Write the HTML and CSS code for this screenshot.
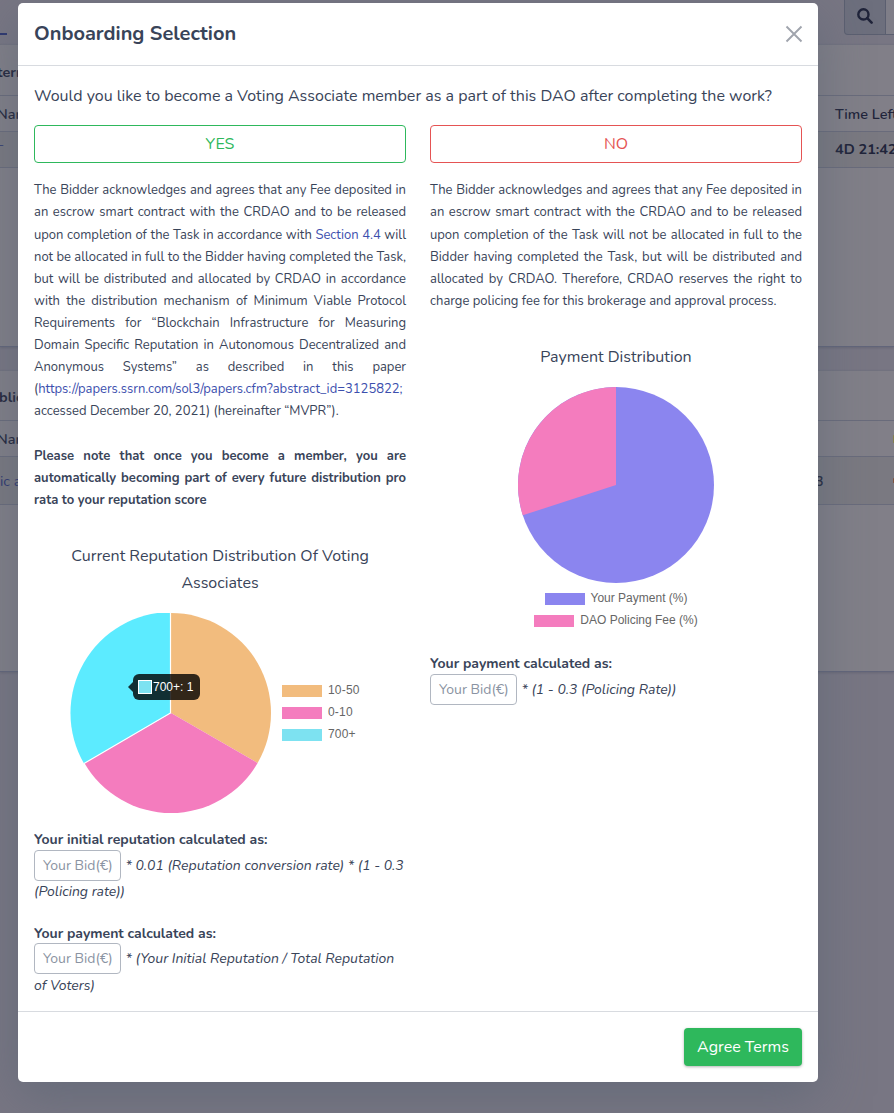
FILE: index.html
```html
<!DOCTYPE html>
<html lang="en">
<head>
<meta charset="utf-8">
<title>Onboarding Selection</title>
<link rel="stylesheet" href="styles.css">
</head>
<body>
<main class="page">
  <div class="toolbar">
    <span class="tab-line"></span>
    <div class="search">
      <span class="search-btn"><svg width="16" height="16" viewBox="0 0 16 16"><circle cx="6.4" cy="6.4" r="5.1" fill="none" stroke="#20243a" stroke-width="2.4"/><path d="M10.2 10.2L14.6 14.6" stroke="#20243a" stroke-width="2.6" stroke-linecap="round"/></svg></span>
      <span class="search-input"></span>
    </div>
  </div>
  <section class="card card-first">
    <div class="card-head">tern</div>
    <div class="row"><span class="cell">Nam</span><span class="cell-right">Time Left</span></div>
    <div class="row row-alt"><span class="cell link dash">–</span><span class="cell-right strong">4D 21:42</span></div>
  </section>
  <section class="card card-second">
    <div class="card-head">blic</div>
    <div class="row"><span class="cell">Nam</span><i class="mark yellow"></i></div>
    <div class="row row-alt row-tall"><span class="cell link">ic a</span><span class="cell-num">3</span><i class="mark red"></i></div>
  </section>
</main>

<div class="modal">
  <header class="modal-head">
    <h1 class="title">Onboarding Selection</h1>
    <svg class="close" width="18" height="18" viewBox="0 0 18 18"><path d="M1.5 1.5L16.5 16.5M16.5 1.5L1.5 16.5" fill="none" stroke="#a0a4ad" stroke-width="1.9"/></svg>
  </header>
  <div class="modal-body">
    <p class="question">Would you like to become a Voting Associate member as a part of this DAO after completing the work?</p>
    <div class="columns">
      <div class="col">
        <button class="choice yes">YES</button>
        <p class="terms">The Bidder acknowledges and agrees that any Fee deposited in an escrow smart contract with the CRDAO and to be released upon completion of the Task in accordance with <a class="anchor">Section 4.4</a> will not be allocated in full to the Bidder having completed the Task, but will be distributed and allocated by CRDAO in accordance with the distribution mechanism of Minimum Viable Protocol Requirements for “Blockchain Infrastructure for Measuring Domain Specific Reputation in Autonomous Decentralized and Anonymous Systems” as described in this paper (<a class="anchor">https://papers.ssrn.com/sol3/papers.cfm?abstract_id=3125822;</a> accessed December 20, 2021) (hereinafter “MVPR”).<br><br><b>Please note that once you become a member, you are automatically becoming part of every future distribution pro rata to your reputation score</b></p>
        <h2 class="chart-title">Current Reputation Distribution Of Voting Associates</h2>
        <div class="rep-chart">
          <svg class="rep-pie" width="202" height="200" viewBox="0 0 202 200">
            <path d="M101 100V0A100 100 0 0 1 187.6 150Z" fill="#f2bc7e"/>
            <path d="M101 100L187.6 150A100 100 0 0 1 14.4 150Z" fill="#f47cbe"/>
            <path d="M101 100L14 150.5A101 101 0 0 1 101 -1Z" fill="#5cebff"/>
            <path d="M100.5 -1V100L14 150.5" fill="none" stroke="#fff" stroke-width="1.2"/>
          </svg>
          <div class="tip"><i class="tip-box"></i>700+: 1</div>
          <ul class="legend">
            <li><i class="sw orange"></i>10-50</li>
            <li><i class="sw pink"></i>0-10</li>
            <li><i class="sw cyan"></i>700+</li>
          </ul>
        </div>
        <div class="calc">
          <b class="calc-label">Your initial reputation calculated as:</b>
          <div class="calc-row"><span class="bid">Your Bid(€)</span><em>* 0.01 (Reputation conversion rate) * (1 - 0.3</em></div>
          <em class="calc-rest">(Policing rate))</em>
        </div>
        <div class="calc calc-second">
          <b class="calc-label">Your payment calculated as:</b>
          <div class="calc-row"><span class="bid">Your Bid(€)</span><em>* (Your Initial Reputation / Total Reputation</em></div>
          <em class="calc-rest">of Voters)</em>
        </div>
      </div>
      <div class="col">
        <button class="choice no">NO</button>
        <p class="terms">The Bidder acknowledges and agrees that any Fee deposited in an escrow smart contract with the CRDAO and to be released upon completion of the Task will not be allocated in full to the Bidder having completed the Task, but will be distributed and allocated by CRDAO. Therefore, CRDAO reserves the right to charge policing fee for this brokerage and approval process.</p>
        <h2 class="chart-title">Payment Distribution</h2>
        <div class="pay-chart">
          <svg width="196" height="196" viewBox="0 0 196 196">
            <circle cx="98" cy="98" r="98" fill="#8b85ef"/>
            <path d="M98 98V0A98 98 0 0 0 4.8 128.3Z" fill="#f47cbe"/>
          </svg>
          <ul class="legend legend-center">
            <li><i class="sw violet"></i>Your Payment (%)</li>
            <li><i class="sw pink"></i>DAO Policing Fee (%)</li>
          </ul>
        </div>
        <div class="calc calc-pay">
          <b class="calc-label">Your payment calculated as:</b>
          <div class="calc-row"><span class="bid">Your Bid(€)</span><em>* (1 - 0.3 (Policing Rate))</em></div>
        </div>
      </div>
    </div>
  </div>
  <footer class="modal-foot"><button class="agree">Agree Terms</button></footer>
</div>
</body>
</html>
```
FILE: styles.css
```css
* { box-sizing: border-box; }
html, body { margin: 0; height: 1113px; overflow: hidden; }
body { position: relative; font-family: Nunito, Lato, "Open Sans", sans-serif; font-size: 16px; line-height: 1.7; color: #394459; background: #787683; }
h1, h2, p, ul { margin: 0; padding: 0; font-weight: 400; }

.toolbar { height: 44px; display: flex; justify-content: space-between; }
.tab-line { width: 7px; height: 2px; margin-top: 33px; background: #2c366f; }
.search { display: flex; height: 35px; width: 50px; }
.search-btn { width: 42px; padding: 8px 0 0 12px; line-height: 0; background: #6d6f7d; border: 1px solid #5b5f70; border-top: 0; border-bottom-left-radius: 4px; }
.search-input { flex: 1; background: #7f7e88; border-bottom: 1px solid #5b5f70; }
.card { background: #817f88; border-top: 1px solid #72727f; border-bottom: 1px solid #62657a; font-size: 14.4px; line-height: 37px; color: #20243a; box-shadow: 0 1px 2px rgba(40,45,70,.2); }
.card-first { height: 303px; }
.card-second { height: 302px; margin-top: 23px; }
.card-head { height: 51px; line-height: 55px; font-weight: 700; border-bottom: 1px solid #696b7b; text-indent: -3px; }
.card-second .card-head { height: 50px; line-height: 53px; text-indent: -1px; }
.row { height: 36px; display: flex; justify-content: space-between; border-bottom: 1px solid #696b7b; white-space: nowrap; }
.cell { margin-left: -3px; font-weight: 600; }
.cell-right { width: 59px; font-weight: 600; }
.strong { font-weight: 700; line-height: 35px; }
.row-alt { background: #7a7981; }
.row-tall { height: 48px; line-height: 48px; }
.link { color: #2c366f; margin-left: 0; font-weight: 400; }
.dash { margin-left: -4px; line-height: 24px; }
.cell-num { width: 78px; margin-left: auto; font-weight: 600; }
.mark { width: 1px; height: 8px; align-self: center; border-radius: 1px; }
.yellow { background: #84804f; }
.red { height: 5px; background: #80533f; }

.modal { position: absolute; left: 18px; top: 3px; width: 800px; height: 1079px; display: flex; flex-direction: column; background: #fff; border-radius: 5px; box-shadow: 0 14px 50px rgba(82,95,112,.5); }
.modal-head { height: 63px; flex: none; padding: 0 15px 0 16px; display: flex; align-items: center; justify-content: space-between; border-bottom: 1px solid #d8dbe0; }
.title { font-size: 20px; font-weight: 700; line-height: 34px; }
.modal-body { flex: 1; padding: 17px 16px 10px; }
.question { height: 27px; margin-bottom: 15px; white-space: nowrap; }
.columns { display: grid; grid-template-columns: 372px 372px; gap: 24px; }
.choice { display: block; width: 100%; height: 38px; padding: 1px 0 0; background: #fff; border: 1px solid; border-radius: 4px; font: inherit; }
.yes { color: #2eb85c; }
.no { color: #e55353; }
.terms { margin-top: 16.4px; font-size: 13px; line-height: 22.1px; text-align: justify; }
.terms b { font-weight: 700; }
.anchor { color: #3c4fae; }
.chart-title { margin-top: 32.2px; font-size: 16px; line-height: 27.2px; text-align: center; }
.rep-chart { position: relative; height: 200px; margin-top: 16px; padding-left: 36px; display: flex; align-items: center; gap: 10px; }
.legend { list-style: none; margin-top: -2px; font: 12px/22px "Liberation Sans", Arial, sans-serif; color: #666; letter-spacing: .2px; }
.legend li { height: 22px; display: flex; align-items: center; gap: 6px; white-space: nowrap; }
.legend-center { margin-top: 0; letter-spacing: 0; }
.legend-center li { justify-content: center; }
.sw { width: 40px; height: 12px; position: relative; top: 1px; }
.orange { background: #f2bc7e; }
.pink { background: #f47cbe; }
.cyan { background: #7de2f1; }
.violet { background: #8b85ef; }
.tip { position: absolute; left: 99px; top: 61px; width: 67px; height: 26px; padding-left: 5px; display: flex; align-items: center; gap: 1px; border-radius: 6px; background: rgba(0,0,0,.8); color: #fff; font: 12px/24px "Liberation Sans", Arial, sans-serif; }
.tip::before { content: ""; position: absolute; left: -5px; top: 8px; border: 5px solid transparent; border-left: 0; border-right-color: rgba(0,0,0,.8); }
.tip-box { width: 14px; height: 14px; background: #7de2f1; border: 1px solid #fff; }
.pay-chart { margin-top: 16px; display: flex; flex-direction: column; align-items: center; gap: 4px; }
.calc { margin-top: 15px; font-size: 14px; line-height: 24px; white-space: nowrap; }
.calc-label { display: block; }
.calc-row { height: 31px; margin-top: -2px; display: flex; align-items: center; gap: 4.5px; }
.bid { flex: none; width: 87px; height: 31px; padding-left: 8px; line-height: 29px; color: #8a93a2; border: 1px solid #b1b7c1; border-radius: 4px; }
.calc-rest { display: block; margin-top: 1px; line-height: 20px; }
.calc-second { margin-top: 20px; }
.calc-second .calc-row { margin-top: -3px; }
.calc-second .calc-rest { margin-top: 2px; }
.calc-pay { margin-top: 21px; }
.modal-foot { height: 71px; flex: none; padding: 16px; display: flex; justify-content: flex-end; border-top: 1px solid #d8dbe0; }
.agree { width: 118px; height: 38px; padding: 1px 0 0; border: 0; border-radius: 4px; background: #2eb85c; color: #fff; font: inherit; box-shadow: 0 1px 3px rgba(0,0,0,.3); }
```
